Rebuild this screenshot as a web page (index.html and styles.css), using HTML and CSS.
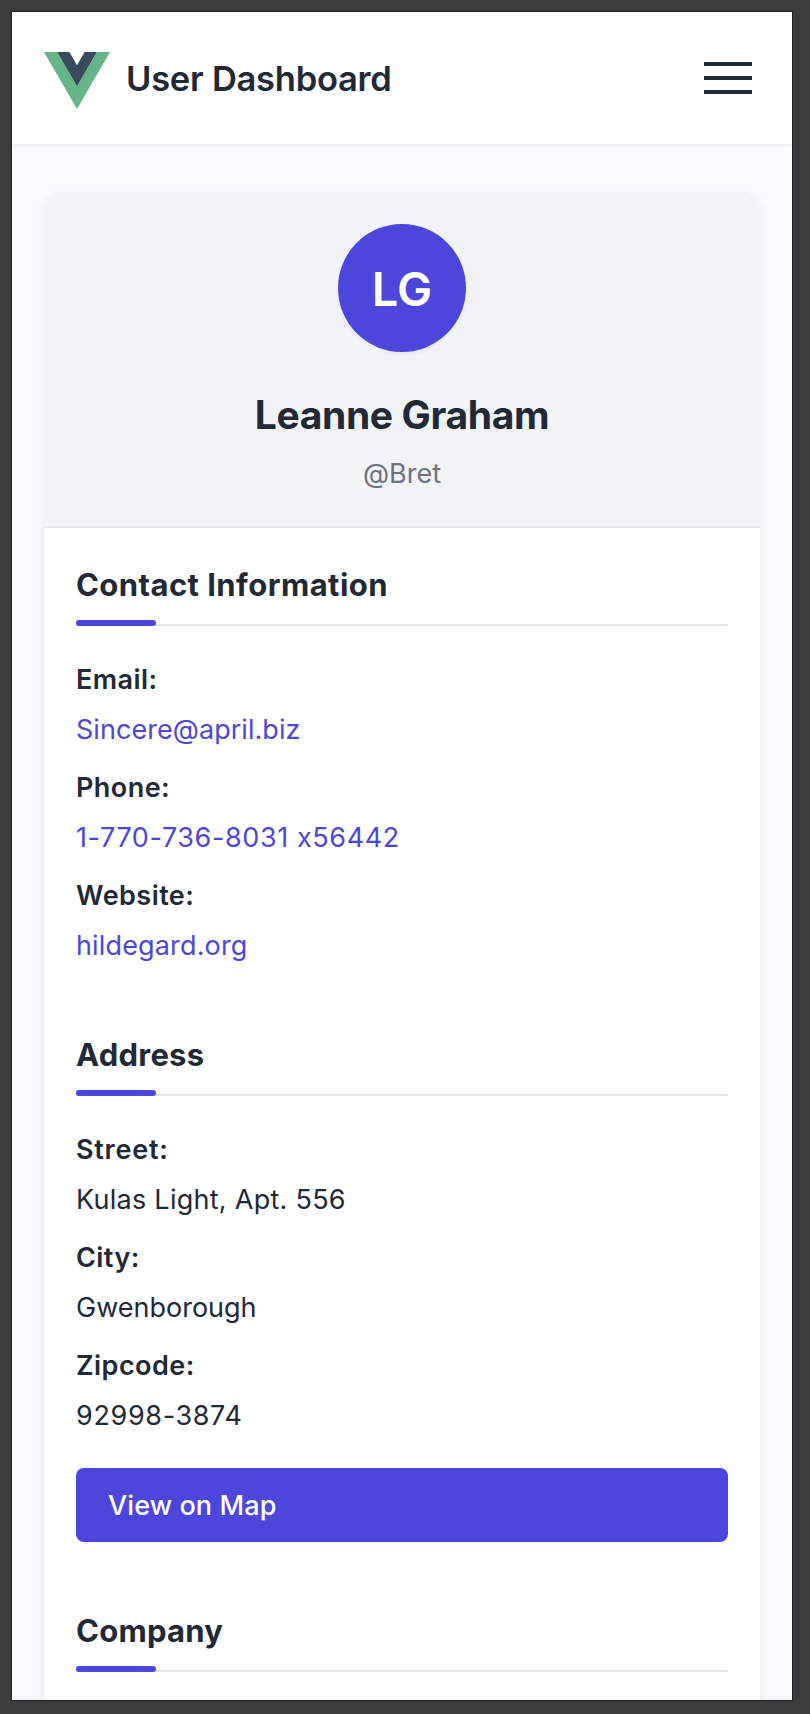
FILE: index.html
```html
<!DOCTYPE html>
<html lang="en">
<head>
<meta charset="utf-8">
<title>User Dashboard</title>
<link rel="stylesheet" href="styles.css">
</head>
<body>
<div class="screen">
  <header class="topbar">
    <div class="brand">
      <svg class="logo" viewBox="0 0 66 57" width="66" height="57" aria-hidden="true">
        <path fill="#64b587" d="M0 0H13.2L33 34.2 52.8 0H66L33 57Z"/>
        <path fill="#384a5d" d="M13.2 0H25.4L33 13.2 40.6 0H52.8L33 34.2Z"/>
      </svg>
      <h1 class="brand-title">User Dashboard</h1>
    </div>
    <button class="menu" aria-label="Menu"><span></span><span></span><span></span></button>
  </header>
  <main class="content">
    <article class="card">
      <div class="profile">
        <div class="avatar">LG</div>
        <h2 class="name">Leanne Graham</h2>
        <p class="handle">@Bret</p>
      </div>
      <div class="details">
        <section class="section">
          <h3 class="section-title wide">Contact Information</h3>
          <dl class="fields">
            <div class="field"><dt>Email:</dt><dd><a class="link email">Sincere@april.biz</a></dd></div>
            <div class="field"><dt>Phone:</dt><dd><a class="link phone">1-770-736-8031 x56442</a></dd></div>
            <div class="field"><dt>Website:</dt><dd><a class="link website">hildegard.org</a></dd></div>
          </dl>
        </section>
        <section class="section">
          <h3 class="section-title">Address</h3>
          <dl class="fields">
            <div class="field"><dt class="street-label">Street:</dt><dd class="street">Kulas Light, Apt. 556</dd></div>
            <div class="field"><dt>City:</dt><dd>Gwenborough</dd></div>
            <div class="field"><dt>Zipcode:</dt><dd class="zipcode">92998-3874</dd></div>
          </dl>
          <a class="map-button">View on Map</a>
        </section>
        <section class="section">
          <h3 class="section-title">Company</h3>
        </section>
      </div>
    </article>
  </main>
</div>
</body>
</html>
```
FILE: styles.css
```css
* { box-sizing: border-box; margin: 0; padding: 0; }
body {
  height: 1714px;
  padding: 11px 17px 13px 11px;
  overflow: hidden;
  background: #3c3c3c;
  color: #212936;
  font: 400 27px/42px Inter, "Liberation Sans", sans-serif;
  font-feature-settings: "calt" 0;
}
.screen {
  height: 1690px;
  overflow: hidden;
  border: 1px solid #222326;
  background: #f9fafc;
}
.topbar {
  position: relative;
  display: flex;
  align-items: center;
  justify-content: space-between;
  height: 132px;
  padding: 0 32px;
  background: #fff;
  box-shadow: 0 2px 4px rgba(0, 0, 0, .05);
}
.brand { display: flex; align-items: center; gap: 16px; }
.logo { display: block; margin-top: 5px; }
.brand-title { padding-top: 2px; font-size: 34.5px; font-weight: 600; line-height: 48px; letter-spacing: -.25px; }
.menu {
  display: flex;
  flex-direction: column;
  gap: 10px;
  padding: 8px;
  border: 0;
  background: none;
}
.menu span { width: 48px; height: 4px; background: #212936; }
.content { padding: 48px 32px; }
.card {
  overflow: hidden;
  border-radius: 16px;
  background: #fff;
  box-shadow: 0 4px 12px -2px rgba(0, 0, 0, .1);
}
.profile {
  display: flex;
  flex-direction: column;
  align-items: center;
  padding: 32px;
  border-bottom: 2px solid #e4e4eb;
  background: #f2f3f5;
}
.avatar {
  display: flex;
  align-items: center;
  justify-content: center;
  width: 128px;
  height: 128px;
  margin-bottom: 32px;
  padding-top: 2px;
  border-radius: 50%;
  background: #4d46dc;
  box-shadow: 0 2px 4px rgba(0, 0, 0, .05);
  color: #fff;
  font-size: 47px;
  font-weight: 600;
}
.name { margin-bottom: 8px; padding-top: 2px; font-size: 39px; font-weight: 700; line-height: 58px; letter-spacing: -.37px; }
.handle, dt, dd { padding-top: 2px; line-height: 40px; }
.handle { color: #6c7280; }
.details { display: flex; flex-direction: column; gap: 64px; padding: 32px; }
.section-title {
  position: relative;
  margin-bottom: 32px;
  padding: 2px 0 16px;
  border-bottom: 2px solid #e4e4eb;
  font-size: 31px;
  font-weight: 700;
  line-height: 46px;
  letter-spacing: .25px;
}
.section-title.wide { letter-spacing: .44px; }
.section-title::after {
  content: "";
  position: absolute;
  bottom: -2px;
  left: 0;
  width: 80px;
  height: 6px;
  border-radius: 3px;
  background: #4d46dc;
}
.fields { display: flex; flex-direction: column; gap: 16px; }
.field { display: flex; flex-direction: column; gap: 8px; }
.field dt { font-weight: 600; letter-spacing: .45px; }
.field .street-label { letter-spacing: .75px; }
.link { color: #4d46dc; }
.email { letter-spacing: .05px; }
.phone { letter-spacing: .6px; }
.website { letter-spacing: .15px; }
.street { letter-spacing: .27px; }
.zipcode { letter-spacing: .65px; }
.map-button {
  display: block;
  margin-top: 32px;
  padding: 18px 32px 16px;
  border-radius: 8px;
  background: #4d46dc;
  color: #fff;
  font-weight: 500;
  line-height: 40px;
  letter-spacing: .1px;
}
```
